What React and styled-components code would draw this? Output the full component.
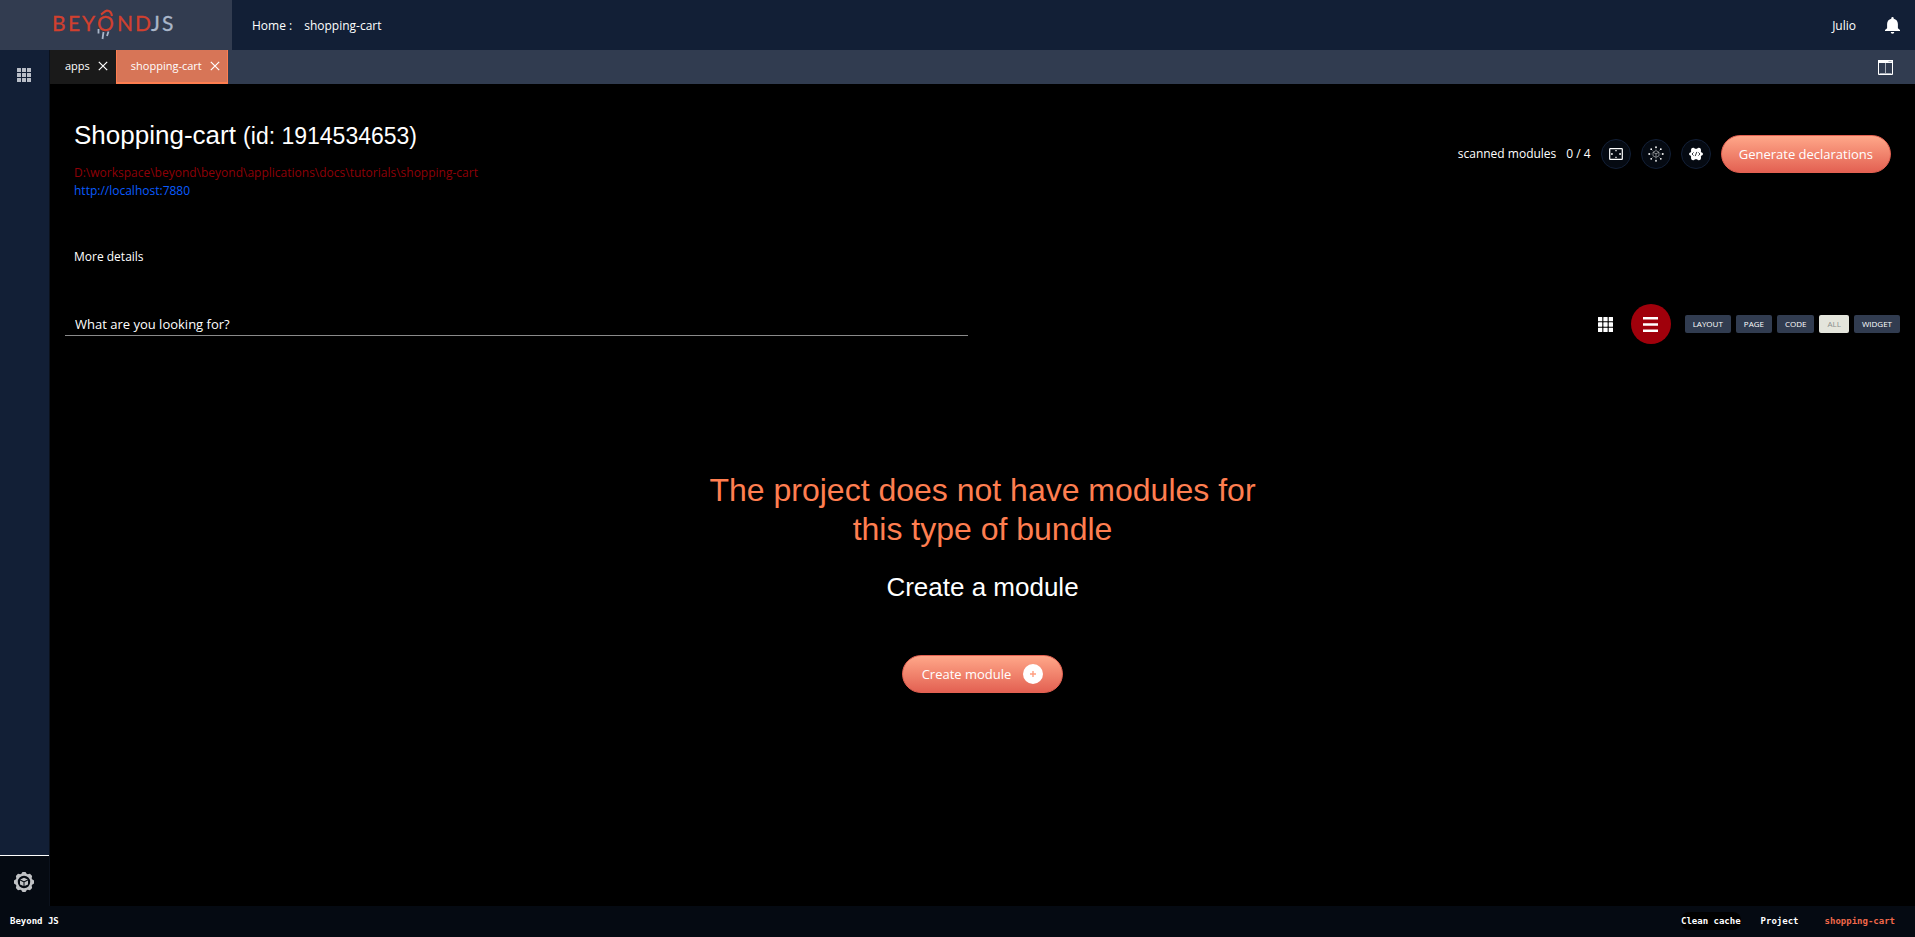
import React from "react";
import styled, { createGlobalStyle } from "styled-components";

const Global = createGlobalStyle`
  *, *::before, *::after { box-sizing: border-box; }
  body { margin: 0; background: #000; color: #fff; font-family: "Open Sans", "Noto Sans", sans-serif; font-size: 12px; line-height: 18px; }
  button, input { font: inherit; color: inherit; }
  button { cursor: pointer; padding: 0; border: 0; background: none; }
  a { text-decoration: none; color: inherit; }
  h1, h2, h3, p, ul { margin: 0; padding: 0; font-weight: 400; }
  svg { display: block; }
`;

const Page = styled.div`
  min-height: 100vh;
  display: flex;
  flex-direction: column;
`;

const Header = styled.header`
  display: flex;
  align-items: center;
  height: 50px;
  background: #121f36;
`;

const Brand = styled.a`
  display: flex;
  align-items: center;
  width: 232px;
  height: 50px;
  padding-left: 52px;
  background: #323c50;
`;

const Crumbs = styled.nav`
  display: flex;
  gap: 12px;
  padding: 2px 0 0 20px;
`;

const Account = styled.div`
  display: flex;
  align-items: center;
  gap: 29px;
  margin-left: auto;
  padding-right: 15px;
`;

const UserName = styled.span`
  padding-top: 2px;
`;

const IconButton = styled.button`
  display: flex;
  color: ${(p) => p.$color || "#fff"};
`;

const Body = styled.div`
  flex: 1;
  display: flex;
`;

const Sidebar = styled.aside`
  display: flex;
  flex-direction: column;
  justify-content: space-between;
  width: 50px;
  background: #121f36;
  border-right: 1px solid #0b111c;
`;

const SideTop = styled.div`
  display: flex;
  justify-content: center;
  padding: 18px 2px 0 0;
`;

const SideBottom = styled.div`
  display: flex;
  align-items: center;
  justify-content: center;
  height: 51px;
  padding: 2px 1px 0 0;
  border-top: 1px solid #fff;
  background: #050a12;
`;

const Workspace = styled.div`
  flex: 1;
  min-width: 0;
  display: flex;
  flex-direction: column;
`;

const TabBar = styled.div`
  display: flex;
  height: 34px;
  padding-right: 22px;
  background: #313c50;
`;

const Tab = styled.div`
  display: flex;
  align-items: center;
  gap: 8px;
  padding: 0 8px 2px 15px;
  font-size: 11px;
  background: ${(p) => (p.$active ? "#d77557" : "#1a1a1a")};
  box-shadow: ${(p) => (p.$active ? "inset 0 -2px #ff7e50, inset 1px 0 #ff7e50, inset -1px 0 #ff7e50" : "none")};
`;

const TabTools = styled.div`
  display: flex;
  align-items: center;
  margin-left: auto;
`;

const Main = styled.main`
  flex: 1;
  display: flex;
  flex-direction: column;
  padding: 33px 15px 0;
`;

const ProjectHead = styled.section`
  display: flex;
  justify-content: space-between;
  padding: 0 9px;
`;

const Title = styled.h1`
  font-family: "Liberation Sans", Arial, sans-serif;
  font-size: 26px;
  line-height: 36px;
  margin-bottom: 10px;
  small { font-size: 23px; }
`;

const Path = styled.p`
  color: #8e0007;
`;

const HostLink = styled.a`
  color: #0a5cff;
`;

const More = styled.button`
  display: block;
  margin-top: 48px;
`;

const Actions = styled.div`
  display: flex;
  align-items: center;
  gap: 10px;
  height: 38px;
  margin-top: 18px;
`;

const RoundButton = styled.button`
  display: flex;
  align-items: center;
  justify-content: center;
  width: 30px;
  height: 30px;
  border: 1px solid #121f36;
  border-radius: 50%;
  background: #050a12;
`;

const PrimaryButton = styled.button`
  display: flex;
  align-items: center;
  gap: 12px;
  height: 38px;
  padding: 0 ${(p) => (p.$icon ? 19 : 17)}px;
  border: 1px solid #e36152;
  border-radius: 19px;
  background: linear-gradient(#ffa789, #e36152);
  font-family: "Open Sans", "Noto Sans", sans-serif;
  font-size: 13px;
`;

const PlusBadge = styled.span`
  display: flex;
  align-items: center;
  justify-content: center;
  width: 20px;
  height: 20px;
  border-radius: 50%;
  background: #fff;
  color: #ff9f80;
`;

const Toolbar = styled.section`
  display: flex;
  align-items: center;
  justify-content: space-between;
  margin-top: 38px;
`;

const SearchInput = styled.input`
  width: calc(50% - 15px);
  height: 24px;
  padding: 0 10px;
  border: 0;
  border-bottom: 1px solid #8a8a8a;
  background: transparent;
  font-size: 13px;
  outline: none;
  &::placeholder { color: #fff; opacity: 1; }
`;

const ViewTools = styled.div`
  display: flex;
  align-items: center;
`;

const ListToggle = styled.button`
  display: flex;
  align-items: center;
  justify-content: center;
  width: 40px;
  height: 40px;
  margin: 0 14px 0 18px;
  border-radius: 50%;
  background: #a0000b;
`;

const Filters = styled.div`
  display: flex;
  gap: 5px;
`;

const Filter = styled.button`
  height: 18px;
  padding: 0 8px;
  border-radius: 2px;
  background: ${(p) => (p.$active ? "#e4e5dc" : "#313c50")};
  color: ${(p) => (p.$active ? "#8b8f8f" : "#fff")};
  font-size: 8px;
  line-height: 18px;
`;

const Empty = styled.section`
  display: flex;
  flex-direction: column;
  align-items: center;
  padding-top: 127px;
  font-family: "Liberation Sans", Arial, sans-serif;
  text-align: center;
`;

const EmptyTitle = styled.h2`
  max-width: 600px;
  color: #ff7e50;
  font-size: 32px;
  line-height: 39px;
`;

const EmptySub = styled.h3`
  margin: 20px 0 50px;
  font-size: 26px;
  line-height: 36px;
`;

const Footer = styled.footer`
  display: flex;
  align-items: center;
  justify-content: space-between;
  height: 31px;
  padding: 0 20px 1px 10px;
  background: #050a12;
  font-family: "DejaVu Sans Mono", monospace;
  font-size: 9px;
  font-weight: 700;
`;

const FooterLinks = styled.div`
  display: flex;
  align-items: center;
  gap: 20px;
`;

const CacheButton = styled.button`
  border-radius: 8px;
  background: #000;
`;

const FooterProject = styled.span`
  margin-left: 6px;
  color: #f0684a;
`;

const Logo = () => (
  <svg width="124" height="36" viewBox="0 0 124 36" role="img" aria-label="BeyondJS">
    <g fontFamily="Lato, sans-serif" fontSize="21">
      <g fill="#d1402f" stroke="#d1402f" strokeWidth=".3">
        <text x="0" y="24">B</text>
        <text x="16" y="24">E</text>
        <text x="30" y="24">Y</text>
        <text x="45" y="24">O</text>
        <text x="65" y="24">N</text>
        <text x="83" y="24">D</text>
      </g>
      <g fill="#a9b6c9" stroke="#a9b6c9" strokeWidth=".3">
        <text x="99" y="24">J</text>
        <text x="110" y="24">S</text>
      </g>
    </g>
    <path d="M49 7.500C51 6.500 52.500 4 55 3.500C58 3.500 59.500 6 60 9" fill="none" stroke="#d1402f" strokeWidth="2.200" />
    <path d="M46.500 22v4.500M51.500 25l-1 7M56.500 24.500l-1.500 4.500" fill="none" stroke="#a9b6c9" strokeWidth="1.800" />
  </svg>
);

const GridIcon = ({ size = 14 }) => (
  <svg width={size} height={size} viewBox="0 0 14 14" fill="currentColor" aria-hidden="true">
    {[0, 5, 10].map((y) => [0, 5, 10].map((x) => <rect key={`${x}-${y}`} x={x} y={y} width="4" height="4" rx=".3" />))}
  </svg>
);

const CloseIcon = () => (
  <svg width="10" height="10" viewBox="0 0 10 10" fill="none" stroke="currentColor" strokeWidth="1.200" aria-hidden="true">
    <path d="M.8.8l8.400 8.400M9.200.8L.8 9.200" />
  </svg>
);

const BellIcon = () => (
  <svg width="15" height="17" viewBox="0 0 15 17" fill="currentColor" aria-hidden="true">
    <path d="M6.300 1.700V1.200a1.200 1.200 0 0 1 2.400 0v.5c2.600.6 4.200 2.600 4.200 5.300v4.200L15 13v.9H0V13l2.100-1.800V7C2.100 4.300 3.700 2.300 6.300 1.700zM5.700 15h3.600a1.800 1.800 0 0 1-3.600 0z" />
  </svg>
);

const ColumnsIcon = () => (
  <svg width="15" height="15" viewBox="0 0 15 15" aria-hidden="true">
    <path d="M.5 2.500h14v12H.5z" fill="none" stroke="currentColor" />
    <path d="M7.500 3v11M1.500 13.500h12" fill="none" stroke="#a9afb9" />
    <path d="M0 0h15v3H0z" fill="currentColor" />
    <path d="M10.500 1.500h3" stroke="#9aa1ad" strokeWidth=".8" />
  </svg>
);

const ScanIcon = () => (
  <svg width="14" height="12" viewBox="0 0 14 12" fill="none" stroke="currentColor" aria-hidden="true">
    <rect x=".7" y=".7" width="12.600" height="10.600" rx=".6" strokeWidth="1.200" />
    <path d="M2 6h1.800M10.200 6H12M7 2v1.300M7 8.700V10" strokeWidth="1.300" />
  </svg>
);

const ModulesIcon = () => (
  <svg width="16" height="16" viewBox="0 0 16 16" aria-hidden="true">
    <path d="M8 4.600l3 1.600v3.600l-3 1.600-3-1.600V6.200zM5 6.200l3 1.600 3-1.600M8 7.800v3.600" fill="none" stroke="#b4b7ba" strokeWidth=".7" />
    <path d="M8 2v2M8 12v2M2 8h2M12 8h2M3.600 3.600l1.300 1.300M11.100 11.100l1.300 1.300M12.400 3.600l-1.300 1.300M4.900 11.100l-1.300 1.300" stroke="#777c83" strokeWidth=".5" />
    <g fill="#fff">
      {[[8, 1.2], [8, 14.8], [1.2, 8], [14.8, 8], [3.2, 3.2], [12.8, 3.2], [3.2, 12.8], [12.8, 12.8]].map(([x, y]) => (
        <circle key={`${x}-${y}`} cx={x} cy={y} r=".9" />
      ))}
    </g>
  </svg>
);

const CodeGearIcon = () => (
  <svg width="14" height="14" viewBox="0 0 14 14" aria-hidden="true">
    <path d="M2.800 1l2.100-.3L6 1.700h2l1.100-1 2.100.3.9 1.900-.3 1.400.7 1.100 1.300.7v1.800l-1.300.7-.7 1.100.3 1.400-.9 1.900-2.100.3-1.100-1H6l-1.100 1-2.100-.3-.9-1.900.3-1.400-.7-1.100L.2 7.900V6.100l1.300-.7.7-1.100-.3-1.400z" fill="#fff" />
    <path d="M4.600 5.400L3 7l1.600 1.600M9.400 5.400L11 7 9.400 8.600M7.800 4.900L6.200 9.100" fill="none" stroke="#050a12" strokeWidth=".8" />
  </svg>
);

const BurgerIcon = () => (
  <svg width="15" height="15" viewBox="0 0 15 15" fill="currentColor" aria-hidden="true">
    <path d="M0 0h15v2.600H0zM0 6.200h15v2.600H0zM0 12.400h15V15H0z" />
  </svg>
);

const PlusIcon = () => (
  <svg width="6" height="6" viewBox="0 0 6 6" stroke="currentColor" strokeWidth="1.400" aria-hidden="true">
    <path d="M3 0v6M0 3h6" />
  </svg>
);

const GearCubeIcon = () => (
  <svg width="20" height="20" viewBox="0 0 20 20" aria-hidden="true">
    <g fill="#c0c2c5">
      {[0, 45, 90, 135, 180, 225, 270, 315].map((a) => (
        <path key={a} d="M6.500 3l2-3h3l2 3z" transform={`rotate(${a} 10 10)`} />
      ))}
    </g>
    <circle cx="10" cy="10" r="7.200" fill="#050a12" stroke="#c0c2c5" strokeWidth="2" />
    <path d="M10 5.800l3.800 1.700L10 9.200 6.200 7.500zM6 8.600l3.500 1.600v3.900L6 12.400zM14 8.600l-3.500 1.600v3.900l3.500-1.700z" fill="#c0c2c5" />
  </svg>
);

const TABS = [{ name: "apps" }, { name: "shopping-cart", active: true }];
const FILTERS = ["LAYOUT", "PAGE", "CODE", "ALL", "WIDGET"];

export default function App() {
  return (
    <Page>
      <Global />
      <Header>
        <Brand href="#home"><Logo /></Brand>
        <Crumbs aria-label="Breadcrumb">
          <a href="#home">Home :</a>
          <a href="#shopping-cart">shopping-cart</a>
        </Crumbs>
        <Account>
          <UserName>Julio</UserName>
          <IconButton aria-label="Notifications"><BellIcon /></IconButton>
        </Account>
      </Header>
      <Body>
        <Sidebar>
          <SideTop>
            <IconButton $color="#b9bec8" aria-label="Applications"><GridIcon /></IconButton>
          </SideTop>
          <SideBottom>
            <IconButton aria-label="Settings"><GearCubeIcon /></IconButton>
          </SideBottom>
        </Sidebar>
        <Workspace>
          <TabBar>
            {TABS.map((t) => (
              <Tab key={t.name} $active={t.active}>
                <a href={`#${t.name}`}>{t.name}</a>
                <IconButton aria-label={`Close ${t.name}`}><CloseIcon /></IconButton>
              </Tab>
            ))}
            <TabTools>
              <IconButton aria-label="Split view"><ColumnsIcon /></IconButton>
            </TabTools>
          </TabBar>
          <Main>
            <ProjectHead>
              <div>
                <Title>Shopping-cart <small>(id: 1914534653)</small></Title>
                <Path>D:\workspace\beyond\beyond\applications\docs\tutorials\shopping-cart</Path>
                <HostLink href="http://localhost:7880">http://localhost:7880</HostLink>
                <More>More details</More>
              </div>
              <Actions>
                <span>scanned modules</span>
                <span>0 / 4</span>
                <RoundButton aria-label="Scan"><ScanIcon /></RoundButton>
                <RoundButton aria-label="Modules"><ModulesIcon /></RoundButton>
                <RoundButton aria-label="Code settings"><CodeGearIcon /></RoundButton>
                <PrimaryButton>Generate declarations</PrimaryButton>
              </Actions>
            </ProjectHead>
            <Toolbar>
              <SearchInput type="text" aria-label="Search" placeholder="What are you looking for?" />
              <ViewTools>
                <IconButton aria-label="Grid view"><GridIcon size={15} /></IconButton>
                <ListToggle aria-label="List view"><BurgerIcon /></ListToggle>
                <Filters>
                  {FILTERS.map((f) => (
                    <Filter key={f} $active={f === "ALL"}>{f}</Filter>
                  ))}
                </Filters>
              </ViewTools>
            </Toolbar>
            <Empty>
              <EmptyTitle>The project does not have modules for this type of bundle</EmptyTitle>
              <EmptySub>Create a module</EmptySub>
              <PrimaryButton $icon>
                Create module
                <PlusBadge><PlusIcon /></PlusBadge>
              </PrimaryButton>
            </Empty>
          </Main>
        </Workspace>
      </Body>
      <Footer>
        <span>Beyond JS</span>
        <FooterLinks>
          <CacheButton>Clean cache</CacheButton>
          <span>Project</span>
          <FooterProject>shopping-cart</FooterProject>
        </FooterLinks>
      </Footer>
    </Page>
  );
}
